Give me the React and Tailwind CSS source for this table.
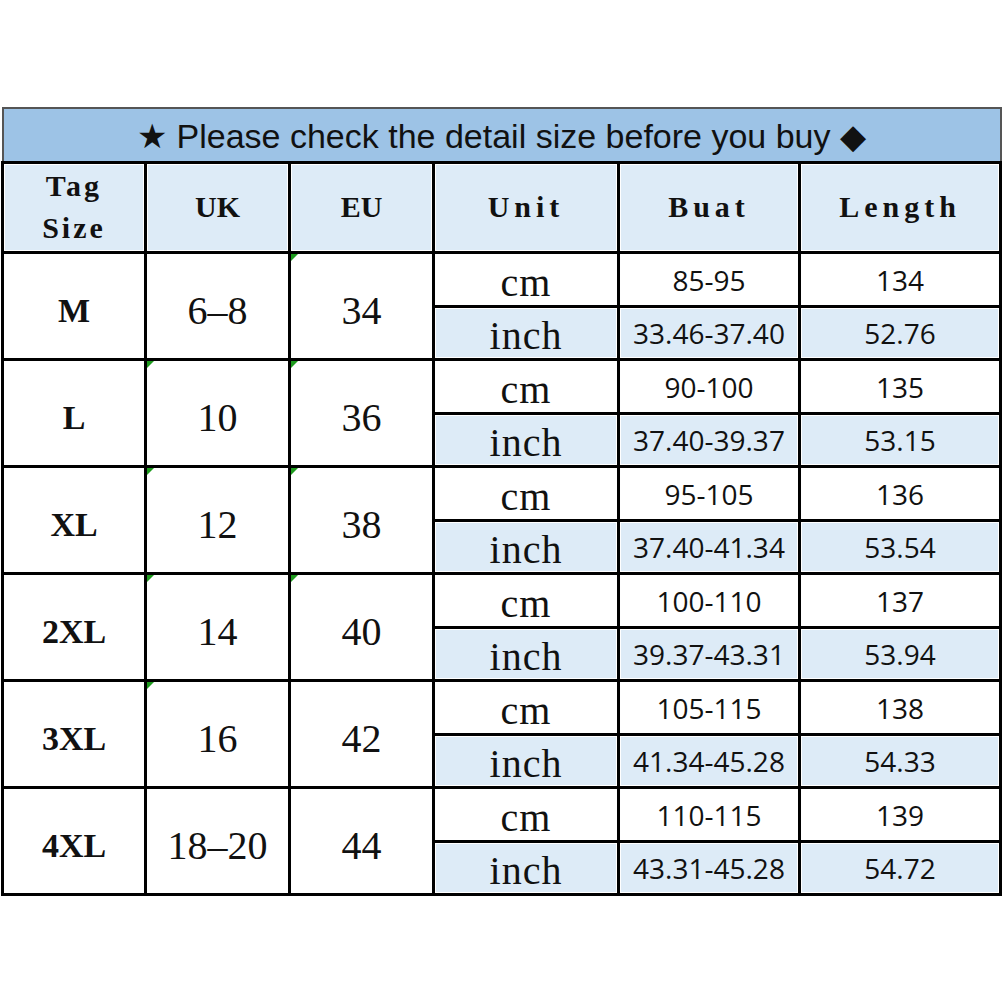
import React from "react";

const rows = [
  { tag: "M", uk: "6\u20138", eu: "34", cm: ["85-95", "134"], inch: ["33.46-37.40", "52.76"], gUK: false, gEU: true },
  { tag: "L", uk: "10", eu: "36", cm: ["90-100", "135"], inch: ["37.40-39.37", "53.15"], gUK: true, gEU: true },
  { tag: "XL", uk: "12", eu: "38", cm: ["95-105", "136"], inch: ["37.40-41.34", "53.54"], gUK: true, gEU: true },
  { tag: "2XL", uk: "14", eu: "40", cm: ["100-110", "137"], inch: ["39.37-43.31", "53.94"], gUK: true, gEU: true },
  { tag: "3XL", uk: "16", eu: "42", cm: ["105-115", "138"], inch: ["41.34-45.28", "54.33"], gUK: true, gEU: false },
  { tag: "4XL", uk: "18\u201320", eu: "44", cm: ["110-115", "139"], inch: ["43.31-45.28", "54.72"], gUK: false, gEU: false },
];

function Green() {
  return (
    <span className="absolute left-0 top-0 w-0 h-0 border-t-[7px] border-r-[7px] border-t-[#1e9b1e] border-r-transparent" />
  );
}

const base = "border-[3px] border-black text-center align-middle p-0 text-[#111]";
const cell = base + " leading-none";
const blue = " bg-[#ddebf7] shadow-[inset_0_0_0_1px_white]";
const head = " text-[30px] font-bold font-['Liberation_Serif','DejaVu_Serif',serif]";
const big = " text-[40px] pt-[10px] font-['Liberation_Serif','DejaVu_Serif',serif]";
const unit = " text-[40px] tracking-[1px] font-['Liberation_Serif','DejaVu_Serif',serif]";
const num = " text-[28px] font-['Open_Sans','Noto_Sans',sans-serif]";

export default function App() {
  return (
    <div className="w-[1002px] h-[1002px] bg-white pt-[107px] pl-[1px]">
      <table className="w-[998px] table-fixed border-collapse">
        <colgroup>
          <col className="w-[143px]" />
          <col className="w-[144px]" />
          <col className="w-[144px]" />
          <col className="w-[185px]" />
          <col className="w-[181px]" />
          <col className="w-[201px]" />
        </colgroup>
        <tbody>
          <tr className="h-[54px]">
            <td
              colSpan={6}
              className="border-2 border-[#555] border-b-[3px] border-b-black bg-[#9dc3e6] text-center align-middle leading-none text-[34px] text-[#111] pt-[2px] font-['Liberation_Sans',Arial,sans-serif]"
            >
              ★ Please check the detail size before you buy ◆
            </td>
          </tr>
          <tr className="h-[90px]">
            <td className={base + blue + head + " leading-[42px] tracking-[3px]"}>
              Tag<br />Size
            </td>
            <td className={cell + blue + head}>UK</td>
            <td className={cell + blue + head}>EU</td>
            <td className={cell + blue + head + " tracking-[5px]"}>Unit</td>
            <td className={cell + blue + head + " tracking-[5px]"}>Buat</td>
            <td className={cell + blue + head + " tracking-[5px]"}>Length</td>
          </tr>
          {rows.map((r) => (
            <React.Fragment key={r.tag}>
              <tr className="h-[54px]">
                <td rowSpan={2} className={cell + " text-[34px] pt-[10px] font-bold font-['Liberation_Serif','DejaVu_Serif',serif]"}>{r.tag}</td>
                <td rowSpan={2} className={cell + big + " relative"}>
                  {r.gUK && <Green />}
                  {r.uk}
                </td>
                <td rowSpan={2} className={cell + big + " relative"}>
                  {r.gEU && <Green />}
                  {r.eu}
                </td>
                <td className={cell + unit + " pt-[8px]"}>cm</td>
                <td className={cell + num + " pt-[2px]"}>{r.cm[0]}</td>
                <td className={cell + num + " pt-[2px]"}>{r.cm[1]}</td>
              </tr>
              <tr className="h-[53px]">
                <td className={cell + blue + unit + " pt-[6px]"}>inch</td>
                <td className={cell + blue + num}>{r.inch[0]}</td>
                <td className={cell + blue + num}>{r.inch[1]}</td>
              </tr>
            </React.Fragment>
          ))}
        </tbody>
      </table>
    </div>
  );
}
